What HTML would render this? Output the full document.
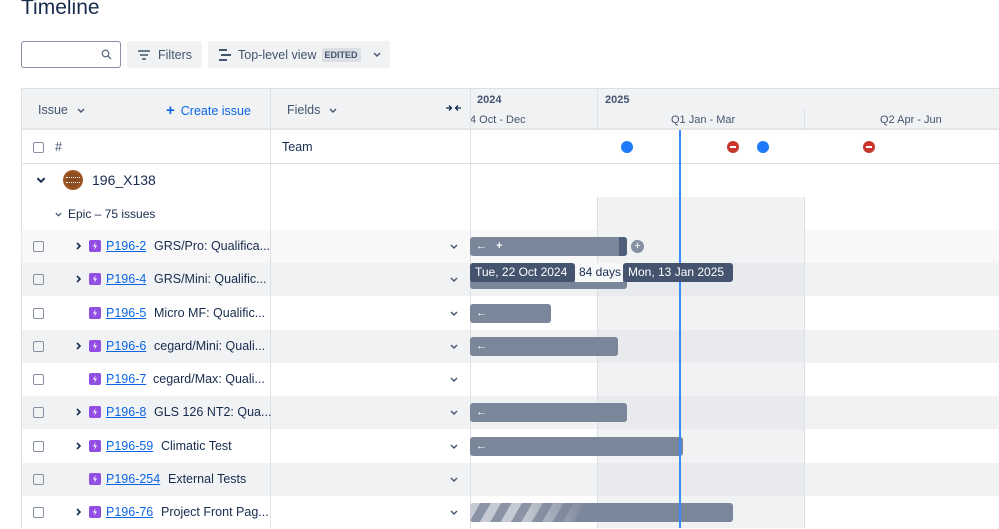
<!DOCTYPE html>
<html><head><meta charset="utf-8"><style>
*{box-sizing:border-box;margin:0;padding:0}
body{width:999px;height:528px;overflow:hidden;background:#fff;font-family:"Liberation Sans",sans-serif;color:#172b4d;position:relative;font-size:12.5px}
.a{position:absolute}
h1{position:absolute;left:21px;top:-4px;font-size:21px;font-weight:500;color:#172b4d}
.btn{position:absolute;top:41px;height:27px;background:#f1f2f4;border-radius:3px;font-size:12.5px;display:flex;align-items:center;color:#44546f;font-weight:500}
.row{position:absolute;left:21px;width:978px;height:33px}
.cb{position:absolute;left:12px;width:11px;height:11px;border:1.5px solid #8590a2;border-radius:2px;top:11px}
.ic{position:absolute;left:68px;top:10px;width:12px;height:12px;background:#904ee2;border-radius:2px}
.key{position:absolute;left:85px;top:9px;color:#0c66e4;text-decoration:underline}
.sum{position:absolute;top:9px;color:#172b4d}
.exp{position:absolute;left:55px;top:12px}
.dd{position:absolute;left:429px;top:14px}
.bar{position:absolute;height:19px;background:#7a869a;border-radius:3px;left:449px;color:#fff;font-size:11px;padding-left:6px;line-height:19px;font-weight:bold}
.vl{position:absolute;width:1px;background:#dcdfe4}
.dot{position:absolute;top:141px;width:12px;height:12px;border-radius:50%}
.red{background:#c9372c}
.red:after{content:"";position:absolute;left:3px;top:5px;width:6px;height:2px;background:#fff}
</style></head><body>
<svg width="0" height="0" style="position:absolute"><defs>
<symbol id="dn" viewBox="0 0 8 5"><path d="M1 1l3 3 3-3" fill="none" stroke="#44546f" stroke-width="1.4"/></symbol>
<symbol id="rt" viewBox="0 0 5 8"><path d="M1 1l3 3-3 3" fill="none" stroke="#172b4d" stroke-width="1.6"/></symbol>
<symbol id="bolt" viewBox="0 0 12 12"><path d="M6.8 2L4 6.5h2.2L5.2 10 8 5.5H5.8z" fill="#fff"/></symbol>
</defs></svg>
<h1>Timeline</h1>
<div class="a" style="left:21px;top:41px;width:100px;height:27px;border:1px solid #8590a2;border-radius:3px"><svg class="a" style="left:79px;top:7px" width="11" height="11"><circle cx="4.5" cy="4.5" r="3.3" fill="none" stroke="#626f86" stroke-width="1.3"/><path d="M7 7l3 3" stroke="#626f86" stroke-width="1.4"/></svg></div>
<div class="btn" style="left:127px;width:75px;padding-left:10px"><svg width="14" height="12"><path d="M1 2h12M3 6h8M5 10h4" stroke="#44546f" stroke-width="1.6"/></svg><span style="margin-left:7px">Filters</span></div>
<div class="btn" style="left:208px;width:182px;padding-left:10px"><svg width="14" height="12"><path d="M1 1h8M3 6h10M1 11h8" stroke="#44546f" stroke-width="2"/></svg><span style="margin-left:6px">Top-level view</span><span style="margin-left:5px;background:#dcdfe4;font-size:9px;padding:2px 3px;border-radius:2px;font-weight:bold">EDITED</span><svg style="margin-left:12px" width="8" height="5"><use href="#dn"/></svg></div>

<div class="a" style="left:21px;top:88px;width:978px;height:440px;border-left:1px solid #dcdfe4;border-top:1px solid #dcdfe4"></div>
<div class="a" style="left:22px;top:89px;width:977px;height:41px;background:#f1f2f4;border-bottom:2px solid #e4e6ea"></div>
<div class="a" style="left:38px;top:103px;font-weight:500;color:#44546f">Issue</div><svg class="a" style="left:77px;top:108px" width="8" height="5"><use href="#dn"/></svg>
<div class="a" style="left:166px;top:102px;color:#0c66e4;font-weight:500"><b style="font-size:15px;margin-right:6px">+</b>Create issue</div>
<div class="a" style="left:287px;top:103px;font-weight:500;color:#44546f">Fields</div><svg class="a" style="left:329px;top:108px" width="8" height="5"><use href="#dn"/></svg>
<svg class="a" style="left:446px;top:104px" width="15" height="8"><path d="M0 4h5M3 1.5l2.5 2.5L3 6.5M15 4h-5M12 1.5L9.5 4 12 6.5" fill="none" stroke="#172b4d" stroke-width="1.3"/></svg>
<div class="a" style="left:477px;top:94px;font-size:11px;font-weight:bold;color:#44546f">2024</div>
<div class="a" style="left:605px;top:94px;font-size:11px;font-weight:bold;color:#44546f">2025</div>
<div class="a" style="left:470px;top:114px;font-size:11px;color:#44546f">4 Oct - Dec</div>
<div class="a" style="left:671px;top:114px;font-size:11px;color:#44546f">Q1 Jan - Mar</div>
<div class="a" style="left:880px;top:114px;font-size:11px;color:#44546f">Q2 Apr - Jun</div>
<div class="vl" style="left:597px;top:89px;height:41px"></div>
<div class="vl" style="left:804px;top:110px;height:20px"></div>

<div class="a" style="left:22px;top:130px;width:977px;height:34px;border-bottom:1px solid #dcdfe4"></div>
<div class="cb" style="left:33px;top:142px"></div>
<div class="a" style="left:55px;top:140px;color:#44546f">#</div>
<div class="a" style="left:282px;top:140px">Team</div>
<div class="dot" style="left:621px;background:#1d7afc"></div>
<div class="dot red" style="left:727px"></div>
<div class="dot" style="left:757px;background:#1d7afc"></div>
<div class="dot red" style="left:863px"></div>

<svg class="a" style="left:36px;top:177px" width="10" height="6" viewBox="0 0 8 5"><path d="M1 1l3 3 3-3" fill="none" stroke="#172b4d" stroke-width="1.6"/></svg>
<div class="a" style="left:63px;top:170px;width:20px;height:20px;border-radius:50%;background:radial-gradient(circle,#8a4a20 40%,#c0672a);"><div class="a" style="left:3px;top:7px;width:14px;height:6px;border-top:1.5px dotted #fff;border-bottom:1.5px dotted #fff"></div></div>
<div class="a" style="left:92px;top:172px;font-size:14px">196_X138</div>
<svg class="a" style="left:55px;top:212px" width="7" height="5"><use href="#dn"/></svg>
<div class="a" style="left:68px;top:207px;font-size:12px">Epic – 75 issues</div>

<div class="a" style="left:597px;top:197px;width:207px;height:331px;background:#f1f2f4"></div>

<div class="row" style="top:230px;background:rgba(241,242,244,.5)"></div>
<div class="row" style="top:263px;background:rgba(220,223,228,.4)"></div>
<div class="row" style="top:330px;background:rgba(220,223,228,.4)"></div>
<div class="row" style="top:396px;background:rgba(220,223,228,.4)"></div>
<div class="row" style="top:463px;background:rgba(220,223,228,.4)"></div>
<div class="vl" style="left:270px;top:89px;height:439px"></div>
<div class="vl" style="left:470px;top:89px;height:439px"></div>
<div class="vl" style="left:597px;top:197px;height:331px"></div>
<div class="vl" style="left:804px;top:197px;height:331px"></div>

<div class="row" style="top:230px"><div class="cb"></div><svg class="exp" width="5" height="8"><use href="#rt"/></svg><svg class="ic"><use href="#bolt"/></svg><span class="key">P196-2</span><span class="sum" style="left:133px">GRS/Pro: Qualifica...</span><svg class="dd" width="8" height="5"><use href="#dn"/></svg><div class="bar" style="top:7px;width:157px">&#8592; &nbsp; +<div class="a" style="right:0;top:0;width:8px;height:19px;background:#505f79;border-radius:0 3px 3px 0"></div></div><div class="a" style="left:610px;top:10px;width:13px;height:13px;border-radius:50%;background:#8590a2;color:#fff;font-size:11px;text-align:center;line-height:13px">+</div></div>
<div class="row" style="top:263px"><div class="cb"></div><svg class="exp" width="5" height="8"><use href="#rt"/></svg><svg class="ic"><use href="#bolt"/></svg><span class="key">P196-4</span><span class="sum" style="left:133px">GRS/Mini: Qualific...</span><svg class="dd" width="8" height="5"><use href="#dn"/></svg><div class="bar" style="top:7px;width:157px"></div></div>
<div class="row" style="top:297px"><div class="cb"></div><svg class="ic"><use href="#bolt"/></svg><span class="key">P196-5</span><span class="sum" style="left:133px">Micro MF: Qualific...</span><svg class="dd" width="8" height="5"><use href="#dn"/></svg><div class="bar" style="top:7px;width:81px">&#8592;</div></div>
<div class="row" style="top:330px"><div class="cb"></div><svg class="exp" width="5" height="8"><use href="#rt"/></svg><svg class="ic"><use href="#bolt"/></svg><span class="key">P196-6</span><span class="sum" style="left:133px">cegard/Mini: Quali...</span><svg class="dd" width="8" height="5"><use href="#dn"/></svg><div class="bar" style="top:7px;width:148px">&#8592;</div></div>
<div class="row" style="top:363px"><div class="cb"></div><svg class="ic"><use href="#bolt"/></svg><span class="key">P196-7</span><span class="sum" style="left:132px">cegard/Max: Quali...</span><svg class="dd" width="8" height="5"><use href="#dn"/></svg></div>
<div class="row" style="top:396px"><div class="cb"></div><svg class="exp" width="5" height="8"><use href="#rt"/></svg><svg class="ic"><use href="#bolt"/></svg><span class="key">P196-8</span><span class="sum" style="left:133px">GLS 126 NT2: Qua...</span><svg class="dd" width="8" height="5"><use href="#dn"/></svg><div class="bar" style="top:7px;width:157px">&#8592;</div></div>
<div class="row" style="top:430px"><div class="cb"></div><svg class="exp" width="5" height="8"><use href="#rt"/></svg><svg class="ic"><use href="#bolt"/></svg><span class="key">P196-59</span><span class="sum" style="left:140px">Climatic Test</span><svg class="dd" width="8" height="5"><use href="#dn"/></svg><div class="bar" style="top:7px;width:213px">&#8592;</div></div>
<div class="row" style="top:463px"><div class="cb"></div><svg class="ic"><use href="#bolt"/></svg><span class="key">P196-254</span><span class="sum" style="left:147px">External Tests</span><svg class="dd" width="8" height="5"><use href="#dn"/></svg></div>
<div class="row" style="top:496px"><div class="cb"></div><svg class="exp" width="5" height="8"><use href="#rt"/></svg><svg class="ic"><use href="#bolt"/></svg><span class="key">P196-76</span><span class="sum" style="left:140px">Project Front Pag...</span><svg class="dd" width="8" height="5"><use href="#dn"/></svg><div class="bar" style="top:7px;width:263px;background:linear-gradient(90deg,rgba(122,134,154,0) 0,rgba(122,134,154,0) 20%,#7a869a 45%),repeating-linear-gradient(120deg,#c5cad3 0 9px,#8a94a6 9px 18px)"></div></div>

<div class="a" style="left:679px;top:130px;width:2px;height:398px;background:#388bff"></div>

<div class="a" style="left:470px;top:263px;width:105px;height:19px;background:#44546f;color:#fff;border-radius:3px;font-size:12px;line-height:19px;padding-left:5px">Tue, 22 Oct 2024</div>
<div class="a" style="left:575px;top:263px;width:48px;height:19px;background:#f7f8f9;font-size:12px;line-height:19px;padding-left:4px">84 days</div>
<div class="a" style="left:623px;top:263px;width:110px;height:19px;background:#44546f;color:#fff;border-radius:3px;font-size:12px;line-height:19px;padding-left:5px">Mon, 13 Jan 2025</div>
</body></html>
